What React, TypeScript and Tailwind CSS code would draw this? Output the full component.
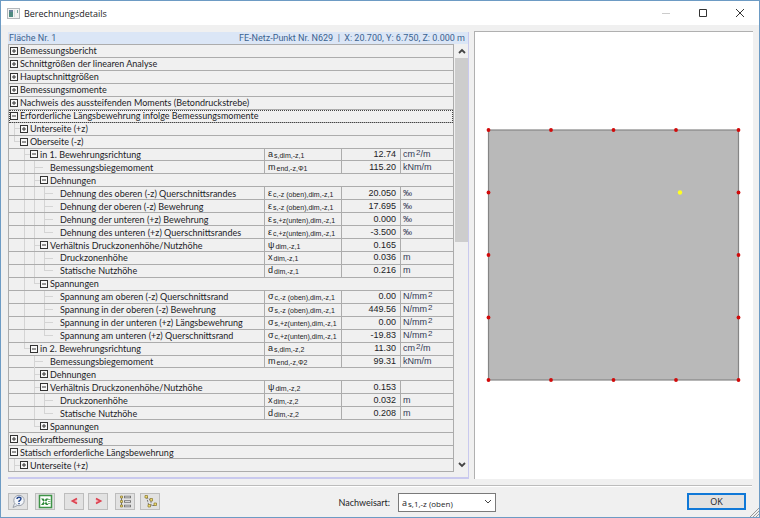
import React from "react";

type Quantity = { base: string; sub: string; value: string; unit: string };
type Row = {
  label: string;
  level: number;
  state?: "open" | "closed";
  quantity?: Quantity;
  selected?: boolean;
  more?: boolean;
};

const q = (base: string, sub: string, value: string, unit: string): Quantity => ({ base, sub, value, unit });

const rows: Row[] = [
  { label: "Bemessungsbericht", level: 0, state: "closed" },
  { label: "Schnittgrößen der linearen Analyse", level: 0, state: "closed" },
  { label: "Hauptschnittgrößen", level: 0, state: "closed" },
  { label: "Bemessungsmomente", level: 0, state: "closed" },
  { label: "Nachweis des aussteifenden Moments (Betondruckstrebe)", level: 0, state: "closed" },
  { label: "Erforderliche Längsbewehrung infolge Bemessungsmomente", level: 0, state: "open", selected: true },
  { label: "Unterseite (+z)", level: 1, state: "closed" },
  { label: "Oberseite (-z)", level: 1, state: "open" },
  { label: "in 1. Bewehrungsrichtung", level: 2, state: "open", quantity: q("a", "s,dim,-z,1", "12.74", "cm²/m") },
  { label: "Bemessungsbiegemoment", level: 3, quantity: q("m", "end,-z,Φ1", "115.20", "kNm/m") },
  { label: "Dehnungen", level: 3, state: "open" },
  { label: "Dehnung des oberen (-z) Querschnittsrandes", level: 4, quantity: q("ε", "c,-z (oben),dim,-z,1", "20.050", "‰") },
  { label: "Dehnung der oberen (-z) Bewehrung", level: 4, quantity: q("ε", "s,-z (oben),dim,-z,1", "17.695", "‰") },
  { label: "Dehnung der unteren (+z) Bewehrung", level: 4, quantity: q("ε", "s,+z(unten),dim,-z,1", "0.000", "‰") },
  { label: "Dehnung des unteren (+z) Querschnittsrandes", level: 4, quantity: q("ε", "c,+z(unten),dim,-z,1", "-3.500", "‰") },
  { label: "Verhältnis Druckzonenhöhe/Nutzhöhe", level: 3, state: "open", quantity: q("ψ", "dim,-z,1", "0.165", "") },
  { label: "Druckzonenhöhe", level: 4, quantity: q("x", "dim,-z,1", "0.036", "m") },
  { label: "Statische Nutzhöhe", level: 4, quantity: q("d", "dim,-z,1", "0.216", "m") },
  { label: "Spannungen", level: 3, state: "open" },
  { label: "Spannung am oberen (-z) Querschnittsrand", level: 4, quantity: q("σ", "c,-z (oben),dim,-z,1", "0.00", "N/mm²") },
  { label: "Spannung in der oberen (-z) Bewehrung", level: 4, quantity: q("σ", "s,-z (oben),dim,-z,1", "449.56", "N/mm²") },
  { label: "Spannung in der unteren (+z) Längsbewehrung", level: 4, quantity: q("σ", "s,+z(unten),dim,-z,1", "0.00", "N/mm²") },
  { label: "Spannung am unteren (+z) Querschnittsrand", level: 4, quantity: q("σ", "c,+z(unten),dim,-z,1", "-19.83", "N/mm²") },
  { label: "in 2. Bewehrungsrichtung", level: 2, state: "open", quantity: q("a", "s,dim,-z,2", "11.30", "cm²/m") },
  { label: "Bemessungsbiegemoment", level: 3, quantity: q("m", "end,-z,Φ2", "99.31", "kNm/m") },
  { label: "Dehnungen", level: 3, state: "closed" },
  { label: "Verhältnis Druckzonenhöhe/Nutzhöhe", level: 3, state: "open", quantity: q("ψ", "dim,-z,2", "0.153", "") },
  { label: "Druckzonenhöhe", level: 4, quantity: q("x", "dim,-z,2", "0.032", "m") },
  { label: "Statische Nutzhöhe", level: 4, quantity: q("d", "dim,-z,2", "0.208", "m") },
  { label: "Spannungen", level: 3, state: "closed" },
  { label: "Querkraftbemessung", level: 0, state: "closed" },
  { label: "Statisch erforderliche Längsbewehrung", level: 0, state: "open" },
  { label: "Unterseite (+z)", level: 1, state: "closed", more: true },
];

// True when the branch line in this column runs on below the row.
function continues(index: number, column: number) {
  if (rows[index].more) return true;
  for (let i = index + 1; i < rows.length; i++) {
    if (rows[i].level <= column) return false;
    if (rows[i].level === column + 1) return true;
  }
  return false;
}

function Guides({ index }: { index: number }) {
  const { level } = rows[index];
  return (
    <>
      {Array.from({ length: level }, (_, column) => {
        const own = column === level - 1;
        const below = continues(index, column);
        return (
          <span key={column} className="flex w-[10px] shrink-0 flex-col self-stretch pl-1">
            <span
              className={`flex-1 border-[#d4d4d4] ${own || below ? "border-l" : ""} ${own ? "border-b" : ""}`}
            />
            <span className={`flex-1 border-[#d4d4d4] ${below ? "border-l" : ""}`} />
          </span>
        );
      })}
    </>
  );
}

function Toggle({ state, label }: { state?: "open" | "closed"; label: string }) {
  if (!state) {
    return (
      <span className="flex w-[10px] shrink-0 flex-col self-stretch">
        <span className="w-[3px] flex-1 border-b border-[#d4d4d4]" />
        <span className="flex-1" />
      </span>
    );
  }
  return (
    <button type="button" aria-label={label} aria-expanded={state === "open"} className="mr-[2px] block size-2 shrink-0">
      <svg viewBox="0 0 8 8" className="block size-2" fill="none" stroke="#333">
        <rect x="0.5" y="0.5" width="7" height="7" fill="#f8f8f8" />
        <path d={state === "closed" ? "M2 4h4M4 2v4" : "M2 4h4"} />
      </svg>
    </button>
  );
}

function Unit({ unit }: { unit: string }) {
  const [before, after] = unit.split("²");
  if (after === undefined) return <>{unit}</>;
  return (
    <>
      {before}
      <span className="relative -top-[2px] ml-px text-[8px]">2</span>
      {after}
    </>
  );
}

function ResultRow({ index }: { index: number }) {
  const { label, level, state, quantity, selected } = rows[index];
  const line = "border-b border-[#acacac]";
  return (
    <tr
      className={`grid min-h-0 grid-cols-[minmax(0,1fr)_77px_59px_53px] ${
        selected ? "outline-1 -outline-offset-1 outline-dotted outline-[#444]" : ""
      }`}
    >
      <th
        scope="row"
        aria-level={level + 1}
        className={`flex min-w-0 items-center pl-px text-left font-normal ${line} ${quantity ? "" : "col-span-4"}`}
      >
        <Guides index={index} />
        <Toggle state={state} label={label} />
        <span className="whitespace-nowrap font-[Lato,'Liberation_Sans',sans-serif]">{label}</span>
      </th>
      {quantity && (
        <>
          <td className={`flex items-center whitespace-nowrap border-l pl-[3px] ${line}`}>
            <span>{quantity.base}</span>
            <span className="relative top-px ml-px text-[7px]">{quantity.sub}</span>
          </td>
          <td className={`flex items-center justify-end border-l pr-1 ${line}`}>{quantity.value}</td>
          <td className={`flex items-center whitespace-nowrap border-l pl-[2px] text-[#333a55] ${line}`}>
            <span>
              <Unit unit={quantity.unit} />
            </span>
          </td>
        </>
      )}
    </tr>
  );
}

function ToolButton({ label, children }: { label: string; children: React.ReactNode }) {
  return (
    <button
      type="button"
      aria-label={label}
      className="flex h-[17px] w-5 items-center justify-center border border-[#bdbdbd] bg-[#e2e2e2]"
    >
      <svg viewBox="0 0 16 15" className="h-[15px] w-4" fill="none">
        {children}
      </svg>
    </button>
  );
}

const steps = [0, 1, 2, 3, 4];
const nodes = steps.flatMap((x) =>
  steps.filter((y) => x === 0 || x === 4 || y === 0 || y === 4).map((y) => [13.5 + x * 62.5, 97.5 + y * 62.5]),
);

export default function App() {
  return (
    <main className="flex min-h-screen flex-col border border-[#6d9bc4] bg-[#f0f0f0] font-['Liberation_Sans',Arial,sans-serif] text-[9px] leading-[11px] text-[#1c1c26]">
      <header className="flex h-6 items-center bg-white pl-[6px]">
        <svg viewBox="0 0 13 11" className="h-[11px] w-[13px]">
          <rect x="0.5" y="0.5" width="12" height="10" fill="#f4f4f4" stroke="#b4b8bc" />
          <path d="M2 2h4v7H2z" fill="#4f8a80" />
          <path d="M2 2h4v2H2z" fill="#68809c" />
          <path d="M10 2h1v3h-1z" fill="#7ba79e" />
          <path d="M7 2h1v7H7z" fill="#d8dcdc" />
        </svg>
        <h1 className="ml-1 flex-1 font-['Open_Sans',sans-serif]">Berechnungsdetails</h1>
        <div className="flex items-center gap-[27px] pr-[14px]">
          <button type="button" aria-label="Minimieren" disabled>
            <svg viewBox="0 0 10 10" className="size-[10px]" stroke="#ccc"><path d="M1 5.5h8" /></svg>
          </button>
          <button type="button" aria-label="Maximieren">
            <svg viewBox="0 0 10 10" className="size-[10px]" fill="none" stroke="#333"><path d="M1.5 1.5h7v7h-7z" /></svg>
          </button>
          <button type="button" aria-label="Schließen">
            <svg viewBox="0 0 10 10" className="size-[10px]" stroke="#333"><path d="M1 1l8 8M9 1l-8 8" /></svg>
          </button>
        </div>
      </header>

      <div className="grid flex-1 grid-cols-[461fr_279fr] gap-[5px] px-[6px] pt-[6px] pb-[6px] pl-[7px]">
        <section className="mt-px flex flex-col border-r border-b-2 border-[#c9c9ee]">
          <div className="flex h-3 items-center justify-between bg-[#dbe6f6] pr-[3px] pl-px font-[Roboto,sans-serif] text-[#3b6390]">
            <h2>Fläche Nr. 1</h2>
            <p className="whitespace-pre">FE-Netz-Punkt Nr. N629  |  X: 20.700, Y: 6.750, Z: 0.000 m</p>
          </div>
          <div className="flex flex-1 pb-[5px]">
            <table className="grid flex-1 border border-b-0 border-[#acacac]">
              <tbody className="grid auto-rows-fr">
                {rows.map((_, i) => (
                  <ResultRow key={i} index={i} />
                ))}
              </tbody>
            </table>
            <div className="ml-px flex w-[13px] flex-col">
              <button type="button" aria-label="Nach oben" className="flex h-[14px] items-center justify-center">
                <svg viewBox="0 0 8 6" className="h-[6px] w-2" fill="none" stroke="#444" strokeWidth="1.8"><path d="M1 5l3-3 3 3" /></svg>
              </button>
              <div className="flex-1">
                <div className="h-[46%] bg-[#cdcdcd]" />
              </div>
              <button type="button" aria-label="Nach unten" className="flex h-[14px] items-center justify-center">
                <svg viewBox="0 0 8 6" className="h-[6px] w-2" fill="none" stroke="#444" strokeWidth="1.8"><path d="M1 1l3 3 3-3" /></svg>
              </button>
            </div>
          </div>
        </section>

        <section aria-label="Fläche" className="flex border-t border-l border-[#b0b0b0] bg-white">
          <svg viewBox="0 0 278 446" className="w-full">
            <rect x="13.5" y="97.5" width="250" height="250" fill="#b9b9b9" stroke="#858585" strokeWidth="1.2" />
            {nodes.map(([x, y]) => (
              <circle key={`${x}-${y}`} cx={x} cy={y} r="1.9" fill="#d20a0a" />
            ))}
            <circle cx="205" cy="160" r="2.2" fill="#ffff20" />
          </svg>
        </section>
      </div>

      <footer className="relative flex h-8 items-center px-[7px]">
        <div className="absolute inset-x-[7px] top-0 border-t border-[#bcbcbc] border-b border-b-white" />
        <div className="flex items-center">
          <ToolButton label="Hilfe">
            <circle cx="9" cy="6.5" r="5.2" fill="#f2f5fa" stroke="#9aa0aa" />
            <path d="M4.5 9.5L3 13.5l4.500-2" fill="#e8ecf2" stroke="#9aa0aa" />
            <path d="M7 5q0-1.800 2-1.800t2 1.600q0 1.100-2 2.300v1M9 9v1.200" stroke="#24468c" strokeWidth="1.4" />
          </ToolButton>
          <div className="ml-[7px]">
            <ToolButton label="Excel-Export">
              <rect x="2.5" y="1.5" width="12" height="12" fill="#fff" stroke="#3f9448" strokeWidth="1.5" />
              <path d="M4 4.500h2.500l5 6.500H9zM11.500 4.500H9L4 11h2.500z" fill="#2f8a3a" />
              <path d="M11 5.500h2.500M11 7.500h2.500M11 9.500h2.500" stroke="#7cbc80" />
            </ToolButton>
          </div>
          <div className="ml-[9px] flex gap-1">
            <ToolButton label="Zurück">
              <path d="M11 4L6 7l5 3z" fill="#f6b4ba" />
              <path d="M11 4.500L6.500 7l4.500 2.500" stroke="#dc4452" strokeWidth="1.8" />
            </ToolButton>
            <ToolButton label="Weiter">
              <path d="M6 4l5 3-5 3z" fill="#f6b4ba" />
              <path d="M6 4.500L10.500 7 6 9.500" stroke="#dc4452" strokeWidth="1.8" />
            </ToolButton>
          </div>
          <div className="ml-[7px] flex gap-[5px]">
            <ToolButton label="Alles einklappen">
              <path d="M4.500 2v10" stroke="#777" />
              <path d="M7 3h7M7 7.500h7M7 12h7" stroke="#777" strokeWidth="2.4" />
              <path d="M8 3h5M8 7.500h5M8 12h5" stroke="#eee" strokeWidth="0.8" />
              <path d="M3.500 2h2v2h-2zM3.500 6.500h2v2h-2zM3.500 11h2v2h-2z" fill="#f0dc70" stroke="#87752e" strokeWidth="0.7" />
            </ToolButton>
            <ToolButton label="Alles ausklappen">
              <path d="M4.500 3l2.500 9M4.500 3L9 6.500v5h4" stroke="#777" strokeDasharray="2 1" />
              <path d="M3 1.500h2.500v2.500H3zM8 4.500h2.500V7H8zM6 10.500h2.500V13H6zM12 9h2.500v2.500H12z" fill="#f0dc70" stroke="#87752e" strokeWidth="0.7" />
            </ToolButton>
          </div>
        </div>

        <div className="mt-[2px] ml-auto flex items-center font-[Lato,sans-serif]">
          <label htmlFor="nachweisart">Nachweisart:</label>
          <div className="relative ml-2 h-[19px] w-[98px]">
            <select
              id="nachweisart"
              className="size-full appearance-none border border-[#7a7a7a] bg-white pl-[3px] text-transparent"
            >
              <option>as,1,-z (oben)</option>
            </select>
            <div aria-hidden="true" className="pointer-events-none absolute inset-0 flex items-center justify-between pr-1 pl-1 font-['Open_Sans',sans-serif]">
              <span>
                a<span className="relative top-px ml-px text-[8px]">s,1,-z (oben)</span>
              </span>
              <svg viewBox="0 0 8 6" className="h-[6px] w-2" fill="none" stroke="#444"><path d="M1 1l3 3 3-3" /></svg>
            </div>
          </div>
        </div>
        <button
          type="button"
          className="mr-[6px] ml-[191px] h-[17px] w-[59px] border-2 border-[#1078d7] bg-[#e1e1e1] leading-[13px] font-['Open_Sans',sans-serif]"
        >
          OK
        </button>
        <svg viewBox="0 0 10 10" className="absolute right-0 bottom-0 size-[10px]" stroke="#999">
          <path d="M1 10l9-9M4 10l6-6M7 10l3-3" />
        </svg>
      </footer>
    </main>
  );
}
